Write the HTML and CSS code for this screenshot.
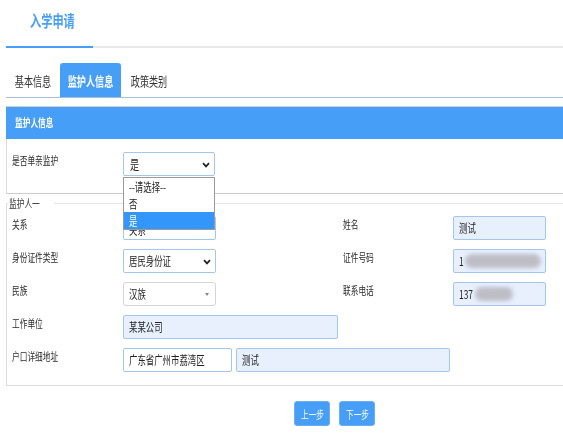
FILE: index.html
```html
<!DOCTYPE html>
<html lang="zh-CN">
<head>
<meta charset="utf-8">
<title>入学申请</title>
<link rel="stylesheet" href="styles.css">
</head>
<body>
<div class="page">
  <div class="titlebar">
    <div class="title"><span class="t">入学申请</span></div>
  </div>

  <div class="tabs">
    <div class="tab tab1"><span class="t tc">基本信息</span></div>
    <div class="tab tab2 active"><span class="t tc">监护人信息</span></div>
    <div class="tab tab3"><span class="t tc">政策类别</span></div>
  </div>

  <div class="panel">
    <div class="panel-head"><span class="t">监护人信息</span></div>
    <div class="panel-body">
      <div class="label"><span class="t">是否单亲监护</span></div>
      <div class="ctl sel blue">
        <span class="t big">是</span>
        <svg class="chev" width="8" height="6" viewBox="0 0 8 6"><path d="M1 1.2 L4 4.4 L7 1.2" fill="none" stroke="#222" stroke-width="1.7"/></svg>
      </div>
      <div class="dropdown">
        <div class="opt"><span class="t">--请选择--</span></div>
        <div class="opt"><span class="t">否</span></div>
        <div class="opt on"><span class="t">是</span></div>
      </div>
    </div>

    <fieldset class="group">
      <legend><span class="t">监护人一</span></legend>

      <div class="row">
        <div class="label"><span class="t">关系</span></div>
        <div class="ctl sel blue"><span class="t hidden-val">关系</span></div>
        <div class="label label2"><span class="t">姓名</span></div>
        <div class="ctl inp"><span class="t">测试</span></div>
      </div>

      <div class="row">
        <div class="label"><span class="t">身份证件类型</span></div>
        <div class="ctl sel blue">
          <span class="t">居民身份证</span>
          <svg class="chev" width="8" height="6" viewBox="0 0 8 6"><path d="M1 1.2 L4 4.4 L7 1.2" fill="none" stroke="#222" stroke-width="1.7"/></svg>
        </div>
        <div class="label label2"><span class="t">证件号码</span></div>
        <div class="ctl inp"><span class="t">1</span><span class="blur blur1"></span></div>
      </div>

      <div class="row">
        <div class="label"><span class="t">民族</span></div>
        <div class="ctl sel gray">
          <span class="t">汉族</span>
          <span class="tri"></span>
        </div>
        <div class="label label2"><span class="t">联系电话</span></div>
        <div class="ctl inp"><span class="t">137</span><span class="blur blur2"></span></div>
      </div>

      <div class="row">
        <div class="label"><span class="t">工作单位</span></div>
        <div class="ctl inp wide"><span class="t">某某公司</span></div>
      </div>

      <div class="row">
        <div class="label"><span class="t">户口详细地址</span></div>
        <div class="ctl sel blue addr1"><span class="t">广东省广州市荔湾区</span></div>
        <div class="ctl inp addr2"><span class="t">测试</span></div>
      </div>
    </fieldset>

    <div class="actions">
      <button class="btn"><span class="t tc">上一步</span></button>
      <button class="btn"><span class="t tc">下一步</span></button>
    </div>
  </div>
</div>
</body>
</html>
```
FILE: styles.css
```css
* { box-sizing: border-box; }

html, body {
  margin: 0;
  overflow: hidden;
}

body {
  width: 563px;
  height: 438px;
  background: #fff;
  color: #333;
  font-family: "Noto Sans CJK SC", "Noto Sans", sans-serif;
}

/* the reference is horizontally condensed */
.t {
  display: inline-block;
  white-space: nowrap;
  transform: scaleX(0.7);
  transform-origin: 0 50%;
}
.tc { transform-origin: 50% 50%; }

.page { width: 563px; }

/* title */
.titlebar {
  margin-left: 6px;
  height: 48px;
  border-bottom: 2px solid #e9e9e9;
}
.title {
  width: 87px;
  height: 48px;
  border-bottom: 2px solid #479ef6;
  padding-left: 24px;
  color: #479ef6;
  font-size: 16px;
  font-weight: bold;
  line-height: 40px;
}

/* tabs */
.tabs {
  display: flex;
  margin: 15px 0 0 6px;
  height: 35px;
  border-bottom: 1px solid #a4bfdf;
}
.tab {
  display: flex;
  justify-content: center;
  align-items: center;
  height: 34px;
  font-size: 13px;
  color: #333;
}
.tab1 { width: 54px; }
.tab2 { width: 61px; }
.tab3 { width: 56px; }
.tab.active {
  background: #479ef6;
  color: #fff;
  font-weight: bold;
  border-radius: 3px 3px 0 0;
}

/* panel */
.panel { margin: 8px 0 0 6px; }
.panel-head {
  height: 33px;
  border-top: 1px solid #cfcfcf;
  background: #479ef6;
  color: #fff;
  font-size: 11px;
  font-weight: bold;
  line-height: 31px;
  padding-left: 9px;
}
.panel-body {
  position: relative;
  display: flex;
  height: 55px;
  padding: 13px 0 0 5px;
  border-left: 1px solid #dcdcdc;
  border-bottom: 1px solid #cdcdcd;
}

.label {
  width: 111px;
  flex: none;
  font-size: 11px;
  line-height: 16px;
  color: #2b2b2b;
}
.label2 { width: 110px; margin-left: 127px; }

.ctl {
  position: relative;
  flex: none;
  width: 93px;
  height: 24px;
  border-radius: 2px;
  font-size: 12px;
  line-height: 22px;
  padding-left: 5px;
  color: #222;
}
.sel { background: #fff; }
.blue { border: 1px solid #a4c6ee; }
.gray { border: 1px solid #d4d4d4; border-radius: 3px; }
.inp { background: #e8f0fe; border: 1px solid #a4c6ee; }
.big { font-size: 13px; }
.hidden-val { margin-top: 2px; }

.panel-body .ctl { width: 92px; padding-left: 6px; }

.chev {
  position: absolute;
  right: 4px;
  top: 9px;
}
.tri {
  position: absolute;
  right: 6px;
  top: 10px;
  width: 0;
  height: 0;
  border-left: 2.5px solid transparent;
  border-right: 2.5px solid transparent;
  border-top: 3px solid #888;
}

.dropdown {
  position: absolute;
  left: 116px;
  top: 38px;
  width: 92px;
  background: #fff;
  border: 1px solid #9a9a9a;
  z-index: 2;
}
.opt {
  height: 17px;
  line-height: 15px;
  padding: 1px 0 0 5px;
  font-size: 12px;
  color: #222;
  overflow: hidden;
}
.opt.on { background: #3296fa; color: #fff; }

/* fieldset */
.group {
  margin: 3px 0 0 0;
  padding: 7px 0 13px 5px;
  border: none;
  border-top: 1px solid #e6e6e6;
  border-left: 1px solid #dcdcdc;
  border-bottom: 1px solid #dcdcdc;
  min-width: 0;
}
.group legend {
  margin-left: -4px;
  padding: 0 1px;
  font-size: 11px;
  line-height: 12px;
  color: #333;
}

.row {
  display: flex;
  height: 24px;
}
.row + .row { margin-top: 9px; }

.wide { width: 215px; }
.addr1 { width: 109px; }
.addr2 { width: 214px; margin-left: 4px; }

.blur {
  position: absolute;
  top: 4px;
  height: 14px;
  background: #bdbdc6;
  border-radius: 7px;
  filter: blur(2px);
}
.blur1 { left: 11px; width: 76px; }
.blur2 { left: 21px; width: 38px; }

/* buttons */
.actions {
  display: flex;
  gap: 9px;
  margin-top: 15px;
  padding-left: 288px;
}
.btn {
  display: flex;
  justify-content: center;
  align-items: center;
  width: 36px;
  height: 25px;
  padding: 0;
  background: #479ef6;
  border: 1px solid #6aaef3;
  border-radius: 3px;
  color: #fff;
  font-family: inherit;
  font-size: 11px;
}
```
